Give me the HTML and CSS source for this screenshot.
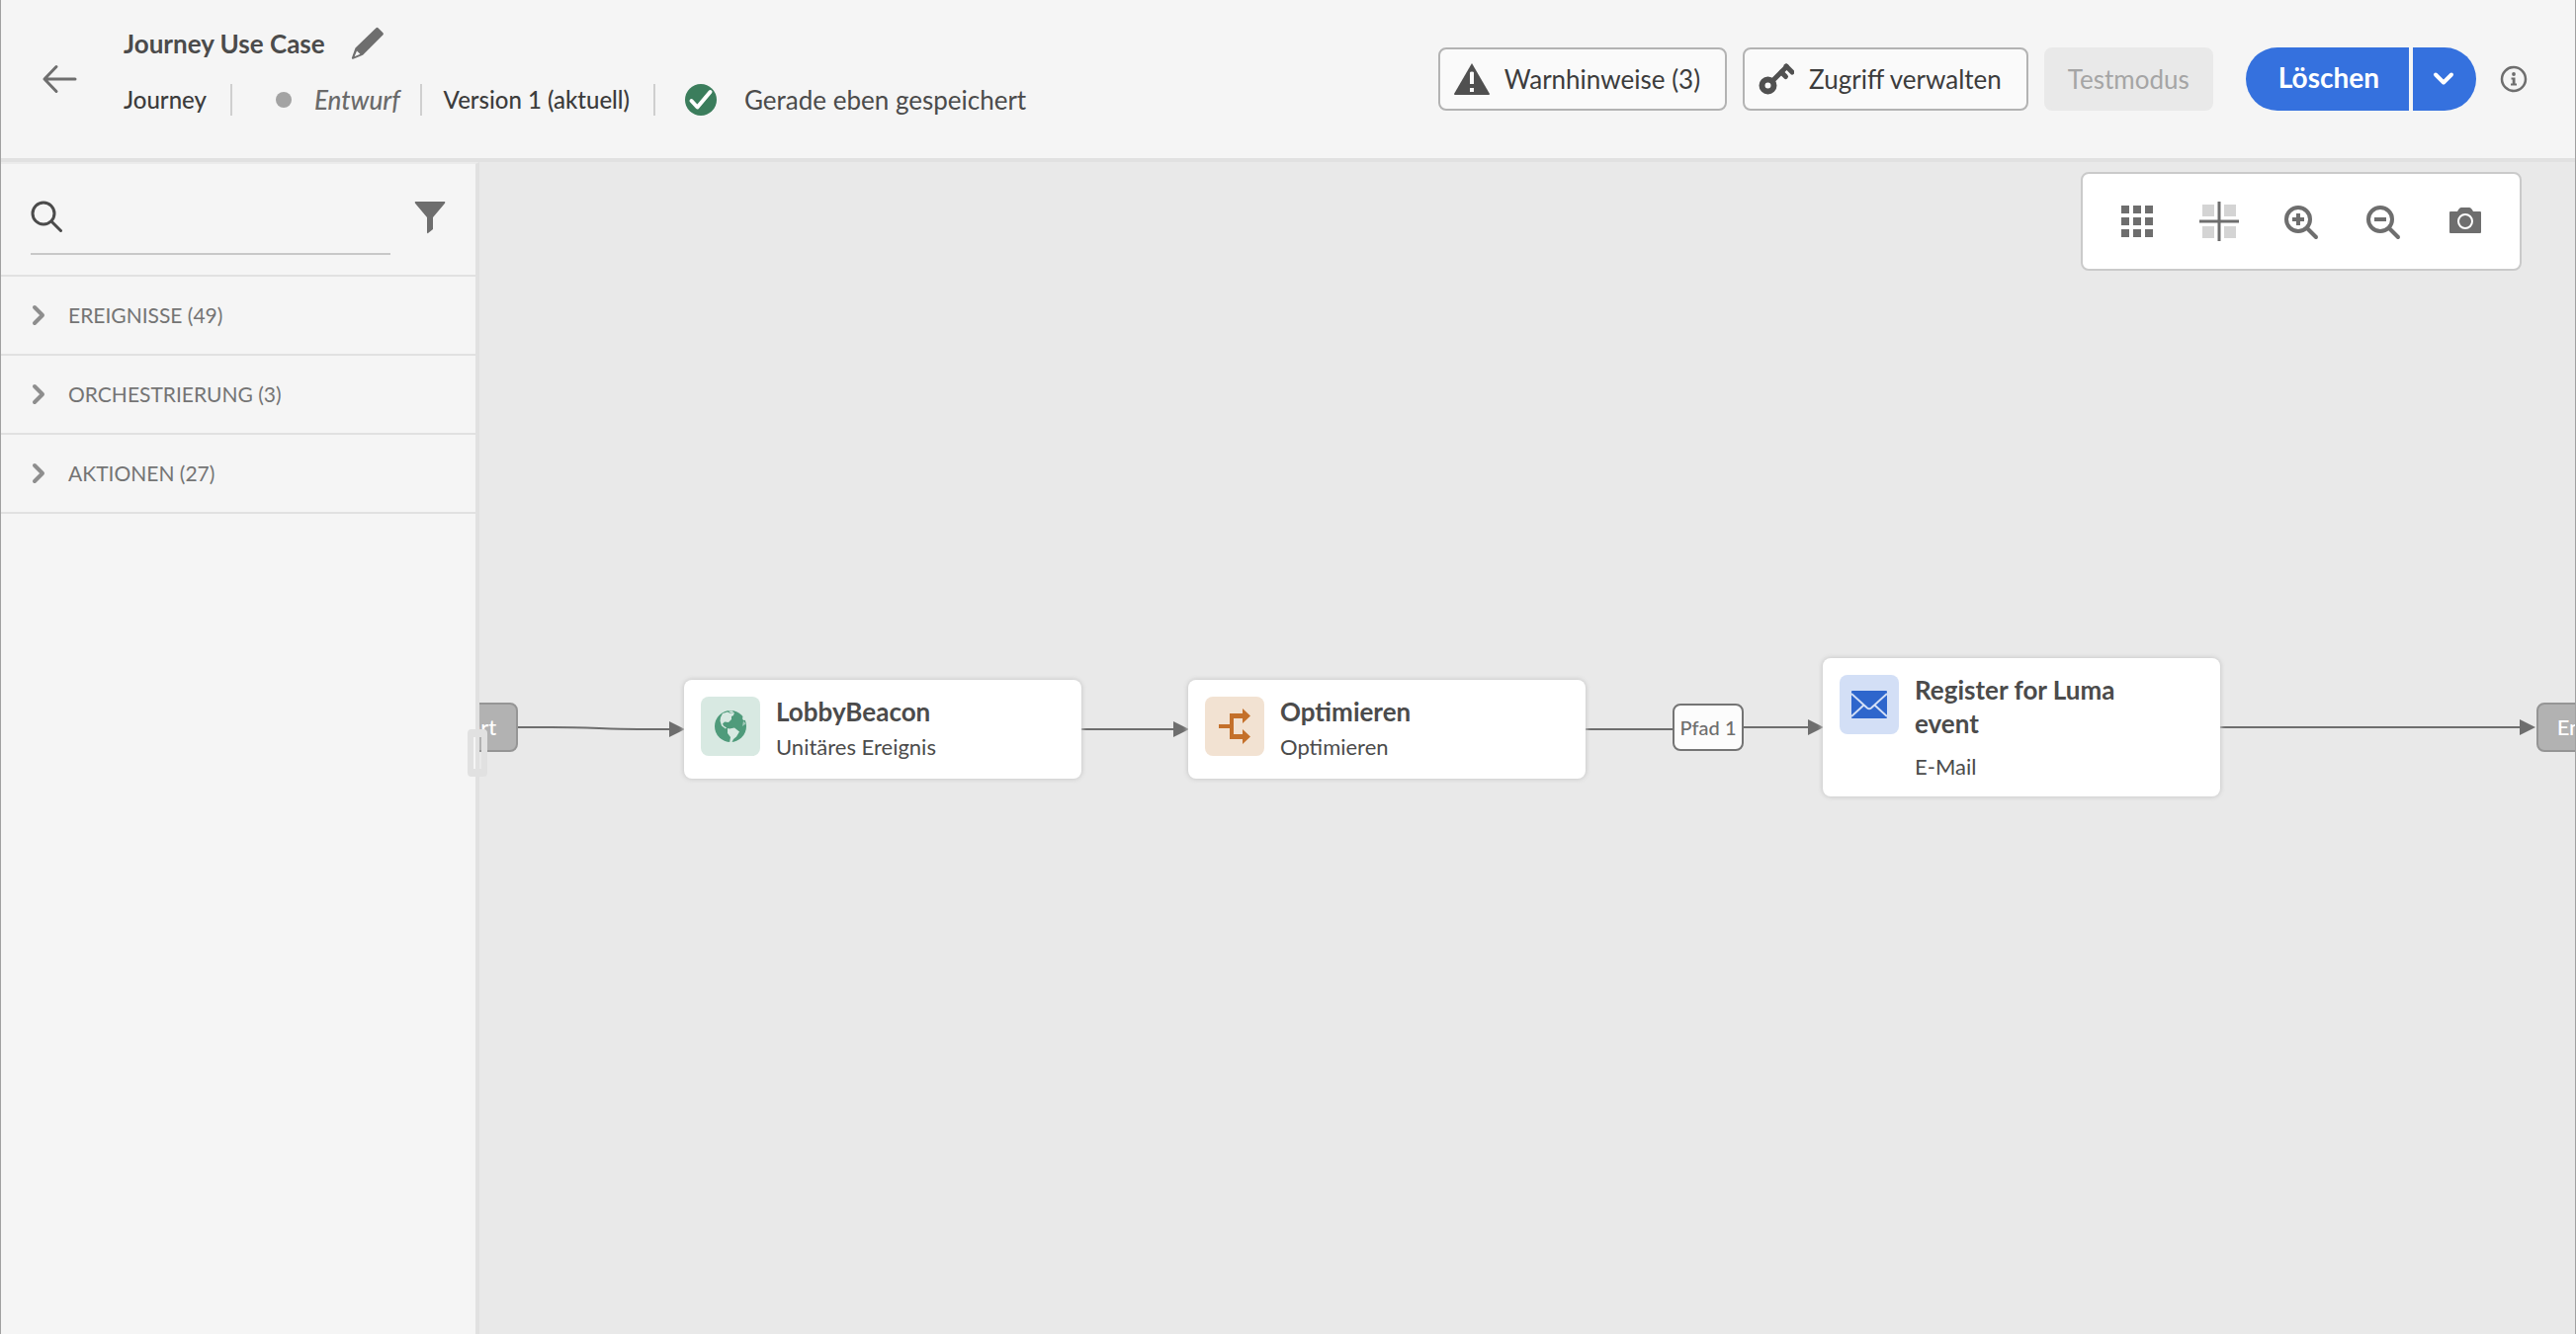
FILE: index.html
```html
<!DOCTYPE html>
<html lang="de">
<head>
<meta charset="utf-8">
<title>Journey Use Case</title>
<link rel="stylesheet" href="styles.css">
</head>
<body>
<div class="app">
  <header class="header">
    <button class="icon-button back" type="button" aria-label="Zurück">
      <svg width="36" height="32" viewBox="0 0 36 32" fill="none" stroke="currentColor" stroke-width="3" stroke-linecap="round" stroke-linejoin="round"><path d="M34 16H3M15 3.500L3 16l12 12.500"/></svg>
    </button>
    <div class="heading">
      <div class="title-row">
        <h1 class="title">Journey Use Case</h1>
        <button class="icon-button" type="button" aria-label="Name bearbeiten">
          <svg width="34" height="34" viewBox="0 0 34 34" fill="currentColor"><path fill-rule="evenodd" d="M25.500 1.200a1.500 1.500 0 0 1 2 0l5 5a1.500 1.500 0 0 1 0 2L12 28.700 2.200 32.700a1 1 0 0 1-1.300-1.300L4.500 21.500zM6 24.500L3.600 30.200l5.800-2.400z"/></svg>
        </button>
      </div>
      <div class="meta-row">
        <span class="meta">Journey</span>
        <span class="meta meta-status"><span class="dot"></span><em>Entwurf</em></span>
        <span class="meta">Version 1 (aktuell)</span>
        <span class="saved">
          <svg width="32" height="32" viewBox="0 0 32 32"><circle cx="16" cy="16" r="16" fill="#3b7d5c"/><path d="M6.500 17l6 6.500L25.500 8" fill="none" stroke="#fff" stroke-width="4" stroke-linecap="round" stroke-linejoin="round"/></svg>
          Gerade eben gespeichert
        </span>
      </div>
    </div>
    <div class="actions">
      <button class="btn" type="button">
        <svg width="36" height="32" viewBox="0 0 36 32"><path d="M18 0l18 31q0 1-1 1H1q-1 0-1-1z" fill="#505050"/><path d="M16 9.500q0-1 2-1t2 1V21h-4zM16 25h4v4h-4z" fill="#fafafa"/></svg>
        <span>Warnhinweise (3)</span>
      </button>
      <button class="btn" type="button">
        <svg width="36" height="34" viewBox="0 0 36 34" fill="none" stroke="#505050"><circle cx="9.500" cy="23.500" r="6" stroke-width="6"/><path d="M14 19L28.500 4.500" stroke-width="5" stroke-linecap="round"/><path d="M28 4l6 6" stroke-width="5" stroke-linecap="round"/><path d="M23 10l4.500 4.500" stroke-width="5" stroke-linecap="round"/></svg>
        <span>Zugriff verwalten</span>
      </button>
      <button class="btn btn-off" type="button" disabled>Testmodus</button>
      <div class="split">
        <button class="split-main" type="button">Löschen</button>
        <button class="split-more" type="button" aria-label="Weitere Aktionen">
          <svg width="22" height="16" viewBox="0 0 22 16" fill="none" stroke="currentColor" stroke-width="4" stroke-linecap="round" stroke-linejoin="round"><path d="M3 3.500l8 8 8-8"/></svg>
        </button>
      </div>
      <button class="icon-button" type="button" aria-label="Info">
        <svg width="28" height="28" viewBox="0 0 28 28"><circle cx="14" cy="14" r="12" fill="none" stroke="currentColor" stroke-width="2.500"/><circle cx="14" cy="9" r="1.900" fill="currentColor"/><path d="M11.500 12.500h4V18.500h1.500V20.500h-6V18.500h1.700V14.500h-1.200z" fill="currentColor"/></svg>
      </button>
    </div>
  </header>
  <div class="body">
    <aside class="sidebar">
      <div class="search-row">
        <label class="search">
          <svg width="32" height="32" viewBox="0 0 32 32" fill="none" stroke="#4b4b4b" stroke-width="3" stroke-linecap="round"><circle cx="13" cy="13" r="11"/><path d="M21.500 21.500l9 9"/></svg>
          <input class="search-input" type="search" aria-label="Suchen">
        </label>
        <button class="icon-button" type="button" aria-label="Filter">
          <svg width="32" height="34" viewBox="0 0 32 34" fill="currentColor"><path d="M1 1h30q.8 1-.2 2L19 17v12l-5 4q-1 .5-1-1V17L1.200 3Q.2 2 1 1z"/></svg>
        </button>
      </div>
      <button class="group" type="button"><svg class="chev" viewBox="0 0 14 22"><path d="M3 3l8 8-8 8"/></svg>EREIGNISSE (49)</button>
      <button class="group" type="button"><svg class="chev" viewBox="0 0 14 22"><path d="M3 3l8 8-8 8"/></svg>ORCHESTRIERUNG (3)</button>
      <button class="group" type="button"><svg class="chev" viewBox="0 0 14 22"><path d="M3 3l8 8-8 8"/></svg>AKTIONEN (27)</button>
      <div class="handle"></div>
    </aside>
    <main class="canvas">
      <svg class="links" width="2121" height="1186" viewBox="0 0 2121 1186">
        <g fill="none" stroke="#6e6e6e" stroke-width="2">
          <path d="M39 572h34C110 572 130 574 160 574h34M609 574h96M1119 574h90M1279 572h68M1761 572h306"/>
        </g>
        <g fill="#6e6e6e"><path d="M192 566l16 8-16 8zM702 566l16 8-16 8zM1344 564l16 8-16 8zM2064 564l16 8-16 8z"/></g>
      </svg>
      <div class="pill pill-start">Start</div>
      <article class="node node-event">
        <div class="tile tile-green">
          <svg width="32" height="32" viewBox="0 0 32 32"><circle cx="16" cy="16" r="16" fill="#4f9b7b"/><path d="M6 7l2-4 5-1.500 3 1.500 4-1-1 3-2 1v3l-3 3-4-.5-2 2 1 2 3 2-1 1-4-3-1.500-5zM13 18l2 .5 5-1 5 4-3 5-3 2.500-2 4h-2l1-6-3-4zM14 .5h4l1 1.500-3 .5zM29 5l-1 3 1 2 3-.5V7z" fill="#d8e9e2"/><path d="M29 10.500l2.500 3L28 16z" fill="#d8e9e2" opacity=".6"/></svg>
        </div>
        <div class="node-text"><h2 class="node-title">LobbyBeacon</h2><p class="node-sub">Unitäres Ereignis</p></div>
      </article>
      <article class="node node-optimize">
        <div class="tile tile-orange">
          <svg width="32" height="38" viewBox="0 0 32 38" fill="#c4702a"><path d="M0 17h11V6h13V1l8 7.500-8 7.500V11H15v16h9v-5l8 7.500-8 7.500v-5H11V21H0z"/></svg>
        </div>
        <div class="node-text"><h2 class="node-title">Optimieren</h2><p class="node-sub">Optimieren</p></div>
      </article>
      <div class="path-label">Pfad 1</div>
      <article class="node node-mail">
        <div class="tile tile-blue">
          <svg width="36" height="28" viewBox="0 0 36 28"><rect width="36" height="28" rx="1" fill="#2e66cc"/><path d="M0 3l16 14.500q2 1.500 4 0L36 3M0 26l12-11M36 26L24 15" fill="none" stroke="#d3dff6" stroke-width="2"/></svg>
        </div>
        <div class="node-text"><h2 class="node-title">Register for Luma event</h2><p class="node-sub">E-Mail</p></div>
      </article>
      <div class="pill pill-end">Ende</div>
      <div class="toolbar">
        <button class="icon-button" type="button" aria-label="Raster"><svg width="40" height="40" viewBox="0 0 40 40" fill="currentColor"><path d="M4 4h8v8H4zM16 4h8v8h-8zM28 4h8v8h-8zM4 16h8v8H4zM16 16h8v8h-8zM28 16h8v8h-8zM4 28h8v8H4zM16 28h8v8h-8zM28 28h8v8h-8z"/></svg></button>
        <button class="icon-button" type="button" aria-label="Hilfslinien"><svg width="40" height="40" viewBox="0 0 40 40"><path d="M3 3h12v12H3zM25 3h12v12H25zM3 25h12v12H3zM25 25h12v12H25z" fill="#d4d4d4"/><path d="M18.500 0h3v18.500H40v3H21.500V40h-3V21.500H0v-3h18.500z" fill="currentColor"/></svg></button>
        <button class="icon-button" type="button" aria-label="Vergrößern"><svg width="40" height="40" viewBox="0 0 40 40" fill="none" stroke="currentColor" stroke-width="4"><circle cx="17" cy="18" r="12"/><path d="M27 28l8 8" stroke-linecap="round"/><path d="M11 18h12M17 12v12"/></svg></button>
        <button class="icon-button" type="button" aria-label="Verkleinern"><svg width="40" height="40" viewBox="0 0 40 40" fill="none" stroke="currentColor" stroke-width="4"><circle cx="17" cy="18" r="12"/><path d="M27 28l8 8" stroke-linecap="round"/><path d="M11 18h12"/></svg></button>
        <button class="icon-button" type="button" aria-label="Bildschirmfoto"><svg width="40" height="40" viewBox="0 0 40 40"><path d="M5 10h7q2-4 4-4h8q2 0 4 4h7q1 0 1 1v20q0 1-1 1H5q-1 0-1-1V11q0-1 1-1z" fill="currentColor"/><circle cx="20" cy="20" r="7" fill="none" stroke="#fff" stroke-width="2"/></svg></button>
      </div>
    </main>
  </div>
</div>
</body>
</html>
```
FILE: styles.css
```css
* { box-sizing: border-box; }

body {
  margin: 0;
  font-family: Lato, "Noto Sans", sans-serif;
  font-size: 26px;
  line-height: 32px;
  color: #4b4b4b;
}

h1, h2, p { margin: 0; font-size: inherit; }

button { font: inherit; color: inherit; cursor: pointer; }

svg { display: block; flex: none; }

.app {
  display: flex;
  flex-direction: column;
  min-height: 100vh;
  background: #f5f5f5;
  border: 0 solid #a0a0a0;
  border-width: 0 1px;
}

.header {
  display: flex;
  align-items: center;
  min-height: 164px;
  padding: 0 48px 0 41px;
  border-bottom: 4px solid #e1e1e1;
}

.icon-button {
  display: flex;
  padding: 0;
  border: 0;
  background: none;
  color: #6e6e6e;
}

.heading {
  display: flex;
  flex-direction: column;
  gap: 24px;
  margin-left: 47px;
  padding-bottom: 16px;
}

.title-row { display: flex; align-items: center; gap: 26px; }

.title { font-weight: 700; }

.meta-row { display: flex; align-items: center; }

.meta {
  display: flex;
  align-items: center;
  padding-right: 24px;
  margin-right: 22px;
  border-right: 2px solid #cfcfcf;
  color: #3c3c3c;
  font-size: 24px;
  font-weight: 500;
  white-space: nowrap;
}

.meta-status { gap: 23px; padding: 0 20px 0 22px; color: #6a6a6a; font-size: 26px; }

.dot { width: 16px; height: 16px; border-radius: 50%; background: #a3a3a3; }

.saved { display: flex; align-items: center; gap: 28px; padding-left: 8px; white-space: nowrap; }

.actions {
  display: flex;
  align-items: center;
  gap: 16px;
  margin-left: auto;
}

.btn {
  display: flex;
  align-items: center;
  gap: 15px;
  height: 64px;
  padding: 0 25px 0 14px;
  border: 2px solid #b3b3b3;
  border-radius: 8px;
  background: #fafafa;
  color: #3c3c3c;
  white-space: nowrap;
}

.btn-off { padding: 0 22px; border-color: #e9e9e9; background: #e9e9e9; color: #a5a5a5; }

.split {
  display: flex;
  gap: 4px;
  height: 64px;
  margin: 0 8px 0 17px;
  color: #fff;
  font-size: 28px;
  font-weight: 700;
}

.split-main, .split-more { border: 0; background: #3571de; }

.split-main { padding: 0 30px 4px 33px; border-radius: 32px 0 0 32px; }

.split-more {
  display: flex;
  align-items: center;
  padding: 0 22px 0 20px;
  border-radius: 0 32px 32px 0;
}

.body { display: flex; flex: 1; }

.sidebar {
  position: relative;
  z-index: 1;
  flex: none;
  width: 484px;
  border-top: 2px solid #ebebeb;
  border-right: 4px solid #e1e1e1;
}

.search-row {
  display: flex;
  align-items: center;
  gap: 24px;
  height: 114px;
  padding: 0 30px 4px;
  border-bottom: 2px solid #e1e1e1;
}

.search {
  display: flex;
  flex: 1;
  align-items: center;
  height: 76px;
  border-bottom: 2px solid #c8c8c8;
}

.search-input {
  flex: 1;
  min-width: 0;
  border: 0;
  outline: 0;
  background: none;
  font: inherit;
}

.group {
  display: flex;
  align-items: center;
  gap: 23px;
  width: 100%;
  height: 80px;
  padding: 0 31px;
  border: 0;
  border-bottom: 2px solid #e1e1e1;
  background: none;
  color: #747474;
  font-size: 21px;
}

.chev {
  width: 14px;
  height: 22px;
  fill: none;
  stroke: #8e8e8e;
  stroke-width: 4;
  stroke-linecap: round;
  stroke-linejoin: round;
}

.handle {
  position: absolute;
  top: 572px;
  right: -12px;
  width: 20px;
  height: 48px;
  border: 6px solid #e1e1e1;
  border-width: 8px 6px;
  border-radius: 4px;
}

/* Free canvas: nodes are placed by their own coordinates. */
.canvas {
  position: relative;
  flex: 1;
  overflow: hidden;
  background: #e9e9e9;
}

.links { position: absolute; top: 0; left: 0; }

.node {
  position: absolute;
  display: flex;
  gap: 16px;
  width: 402px;
  padding: 17px;
  border-radius: 8px;
  background: #fff;
  box-shadow: 0 0 4px 1px #cbcbcb;
}

.node-event { top: 524px; left: 207px; height: 100px; }
.node-optimize { top: 524px; left: 717px; height: 100px; }
.node-mail { top: 502px; left: 1359px; height: 140px; }

.tile {
  display: flex;
  flex: none;
  align-items: center;
  justify-content: center;
  width: 60px;
  height: 60px;
  border-radius: 8px;
}

.tile-green { background: #d8e9e2; }
.tile-orange { background: #f2e2d2; }
.tile-blue { background: #d3dff6; }

.node-text { max-width: 260px; margin-top: -2px; }

.node-title { font-size: 26px; font-weight: 700; line-height: 34px; }

.node-sub { padding-top: 2px; font-size: 22px; line-height: 34px; }

.node-mail .node-sub { padding-top: 10px; }

.pill, .path-label {
  position: absolute;
  display: flex;
  align-items: center;
  justify-content: center;
  height: 50px;
  border: 2px solid #959595;
  border-radius: 8px;
  background: #b2b2b2;
  color: #fff;
  font-size: 22px;
  font-weight: 500;
  white-space: nowrap;
}

.pill { top: 547px; width: 90px; }
.pill-start { left: -51px; }
.pill-end { left: 2081px; }

.path-label {
  top: 548px;
  left: 1207px;
  width: 72px;
  height: 48px;
  border-color: #747474;
  background: #fcfcfc;
  color: #6e6e6e;
  font-size: 20px;
}

.toolbar {
  position: absolute;
  top: 10px;
  right: 54px;
  display: flex;
  align-items: center;
  gap: 43px;
  height: 100px;
  padding: 0 35px;
  border: 2px solid #cacaca;
  border-radius: 8px;
  background: #fff;
}
```
